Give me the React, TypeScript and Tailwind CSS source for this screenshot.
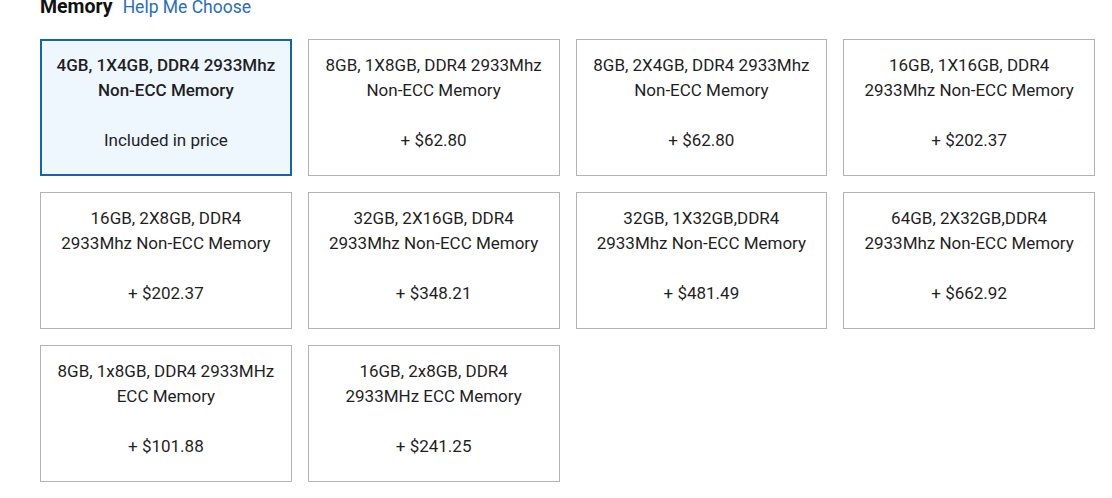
const options = [
  { name: '4GB, 1X4GB, DDR4 2933Mhz Non-ECC Memory', price: 'Included in price', selected: true },
  { name: '8GB, 1X8GB, DDR4 2933Mhz Non-ECC Memory', price: '+ $62.80' },
  { name: '8GB, 2X4GB, DDR4 2933Mhz Non-ECC Memory', price: '+ $62.80' },
  { name: '16GB, 1X16GB, DDR4 2933Mhz Non-ECC Memory', price: '+ $202.37' },
  { name: '16GB, 2X8GB, DDR4 2933Mhz Non-ECC Memory', price: '+ $202.37' },
  { name: '32GB, 2X16GB, DDR4 2933Mhz Non-ECC Memory', price: '+ $348.21' },
  { name: '32GB, 1X32GB,DDR4 2933Mhz Non-ECC Memory', price: '+ $481.49' },
  { name: '64GB, 2X32GB,DDR4 2933Mhz Non-ECC Memory', price: '+ $662.92' },
  { name: '8GB, 1x8GB, DDR4 2933MHz ECC Memory', price: '+ $101.88' },
  { name: '16GB, 2x8GB, DDR4 2933MHz ECC Memory', price: '+ $241.25' },
];

export default function App() {
  return (
    <div className="min-h-[498px] w-[1112px] overflow-hidden bg-white pl-10 font-['Roboto',sans-serif] text-[#1f1f1f]">
      <div className="-mt-[7px] flex items-baseline gap-[10px] leading-[28px]">
        <h2 className="text-[19.5px] font-bold text-[#111]">Memory</h2>
        <a className="text-[17.5px] text-[#2a6ebb]">Help Me Choose</a>
      </div>

      <div className="mt-[18px] grid w-[1055px] grid-cols-4 gap-x-[16px] gap-y-[16px]">
        {options.map((opt) => (
          <button
            key={opt.name}
            className={`flex h-[137px] flex-col items-center px-[14px] text-center text-[17px] leading-[25px] ${
              opt.selected
                ? 'border-2 border-[#1466a8] bg-[#eef6fe] pt-[12px] font-medium'
                : 'border border-[#b3b3b3] bg-white pt-[13px]'
            }`}
          >
            <span className="block">{opt.name}</span>
            <span className={`mt-[25px] block ${opt.selected ? 'font-normal' : ''}`}>{opt.price}</span>
          </button>
        ))}
      </div>
    </div>
  );
}
